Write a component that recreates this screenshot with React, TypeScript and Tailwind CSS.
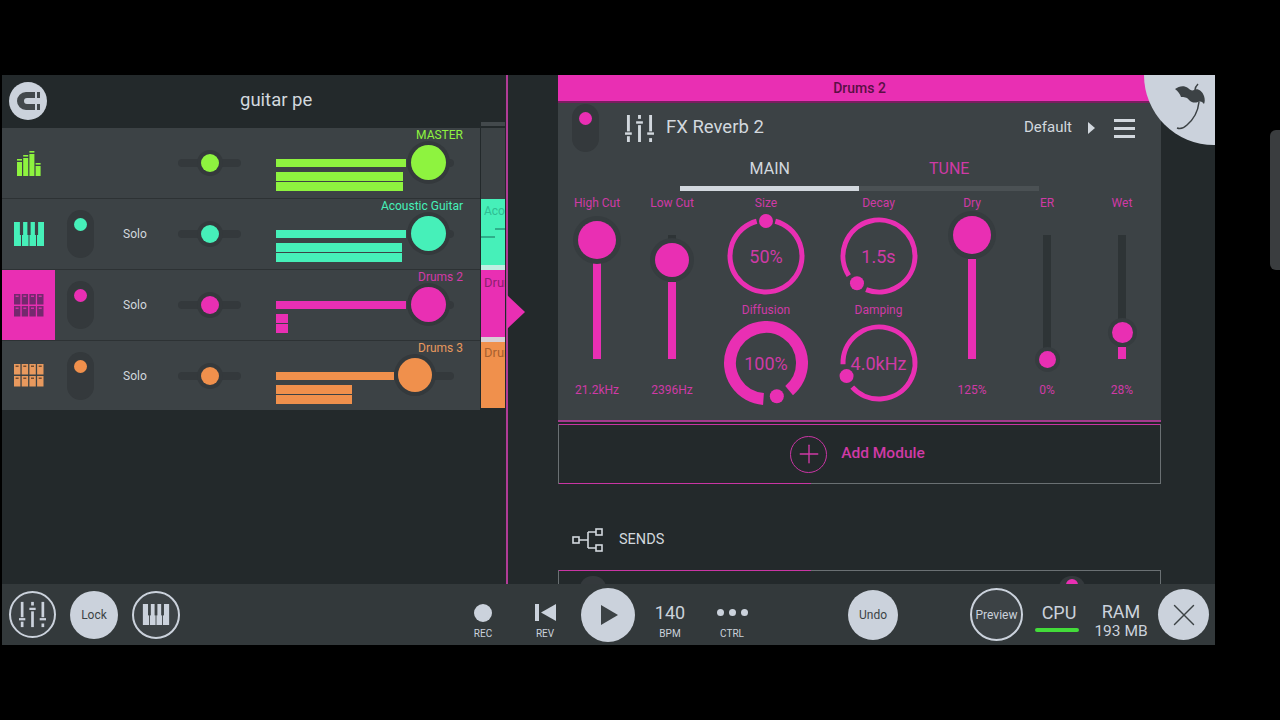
import type { ReactNode } from "react";
import { Plus, X } from "lucide-react";

const font = { fontFamily: "Roboto, 'Noto Sans', sans-serif" };

const tracks = [
  { name: "MASTER", icon: "bars", bg: "bg-[#8ef33f]", text: "text-[#8ef33f]", top: 130, low: 127, knob: 152, size: 35, sw: false },
  { name: "Acoustic Guitar", icon: "piano", bg: "bg-[#46f0b9]", text: "text-[#46f0b9]", top: 130, low: 126, knob: 152, size: 35, sw: true },
  { name: "Drums 2", icon: "grid", bg: "bg-[#e92fb3]", text: "text-[#d33aa8]", top: 130, low: 12, knob: 152, size: 35, sw: true, active: true },
  { name: "Drums 3", icon: "grid", bg: "bg-[#f0904c]", text: "text-[#e8995e]", top: 118, low: 76, knob: 139, size: 34, sw: true },
];

const Mixer = ({ className }: { className?: string }) => (
  <svg viewBox="0 0 30 28" className={className} fill="currentColor">
    <rect x="2" y="0" width="3" height="17" />
    <rect x="0" y="18" width="7" height="2.5" />
    <rect x="2" y="22" width="3" height="6" />
    <rect x="13.5" y="0" width="3" height="4" />
    <rect x="11.5" y="6.5" width="7" height="2.5" />
    <rect x="13.5" y="10.5" width="3" height="17.5" />
    <rect x="25" y="0" width="3" height="17" />
    <rect x="23" y="18" width="7" height="2.5" />
    <rect x="25" y="24" width="3" height="4" />
  </svg>
);

const Piano = ({ className, notch }: { className?: string; notch: string }) => (
  <svg viewBox="0 0 30 24" className={className}>
    <rect x="0" y="0" width="30" height="24" fill="currentColor" />
    {[7.5, 15, 22.5].map((x) => (
      <rect key={x} x={x - 0.5} y="0" width="1" height="24" fill={notch} />
    ))}
    {[7.5, 15, 22.5].map((x) => (
      <rect key={x} x={x - 1.6} y="0" width="3.2" height="13" fill={notch} />
    ))}
  </svg>
);

const GridIcon = ({ className, cut }: { className?: string; cut: string }) => (
  <svg viewBox="0 0 30 23" className={className}>
    {[0, 12].map((y) =>
      [0, 7.7, 15.4, 23.1].map((x) => (
        <g key={`${x}-${y}`}>
          <rect x={x} y={y} width="6.4" height="10.5" fill="currentColor" />
          <rect x={x + 1.6} y={y + 1.6} width="3" height="1.2" fill={cut} />
        </g>
      ))
    )}
  </svg>
);

const BarsIcon = ({ className }: { className?: string }) => (
  <svg viewBox="0 0 24 25" className={className} fill="currentColor">
    <rect x="0" y="8" width="5" height="1.6" />
    <rect x="0" y="11" width="5" height="14" />
    <rect x="6.2" y="4" width="5" height="1.6" />
    <rect x="6.2" y="7" width="5" height="18" />
    <rect x="12.4" y="0" width="5" height="1.6" />
    <rect x="12.4" y="3" width="5" height="22" />
    <rect x="18.6" y="12" width="5" height="1.6" />
    <rect x="18.6" y="15" width="5" height="10" />
  </svg>
);

const Switch = ({ dot }: { dot: string }) => (
  <div className="flex h-[48px] w-[27px] justify-center rounded-[14px] bg-[#34393c] pt-[8px]">
    <div className={`h-[13px] w-[13px] rounded-full ${dot}`} />
  </div>
);

const TrackRow = ({ t }: { t: (typeof tracks)[number] }) => (
  <div className={`flex ${t.name === "Drums 3" ? "h-[69px]" : "h-[71px] border-b border-[#2d3234]"} items-center bg-[#3c4245]`}>
    <div className={`flex h-full w-[53px] shrink-0 items-center justify-center ${t.active ? t.bg : ""}`}>
      {t.icon === "bars" && <BarsIcon className={`h-[25px] w-[24px] ${t.text}`} />}
      {t.icon === "piano" && <Piano className={`h-[24px] w-[30px] ${t.text}`} notch="#3c4245" />}
      {t.icon === "grid" && (
        <GridIcon
          className={`h-[23px] w-[30px] ${t.active ? "text-[#74296e]" : t.text}`}
          cut={t.active ? "#e92fb3" : "#5a3a22"}
        />
      )}
    </div>
    <div className="ml-[12px] w-[27px] shrink-0">{t.sw && <Switch dot={t.bg} />}</div>
    <div className="ml-[29px] w-[55px] shrink-0 text-[12px] text-[#d2d8de]">{t.sw && "Solo"}</div>
    <div className="relative h-[8px] w-[63px] shrink-0 rounded-sm bg-[#34393c]">
      <div className={`absolute left-[22.5px] top-[-5px] h-[18px] w-[18px] rounded-full ring-[4px] ring-[#34393c] ${t.bg}`} />
    </div>
    <div className="relative ml-[35px] h-full w-[187px] shrink-0">
      <div className={`h-[15px] text-right text-[12px] leading-[15px] ${t.text}`}>{t.name}</div>
      <div className={`mt-[16px] h-[8px] ${t.bg}`} style={{ width: t.top }} />
      <div className="mt-[5px] flex flex-col gap-[1px]" style={{ width: t.low }}>
        <div className={`h-[9px] ${t.bg}`} />
        <div className={`h-[9px] ${t.bg}`} />
      </div>
      <div className="absolute top-[31px] h-[8px] rounded-sm bg-[#34393c]" style={{ left: t.knob, width: 178 - t.knob }} />
      <div
        className={`absolute top-[17px] rounded-full ring-[4px] ring-[#34393c] ${t.bg}`}
        style={{ left: t.knob - t.size / 2, width: t.size, height: t.size }}
      />
    </div>
  </div>
);

const Timeline = () => (
  <div className="ml-[1px] flex w-[24px] shrink-0 flex-col">
    <div className="h-[47px] bg-[#23292b]" />
    <div className="h-[4px] bg-[#43494c]" />
    <div className="h-[2px]" />
    <div className="h-[71px] bg-[#3c4245]" />
    <div className="relative h-[66px] overflow-hidden bg-[#46f0b9] text-[12px] leading-none text-[#2fbd93]">
      <div className="whitespace-nowrap pl-[3px] pt-[6px]">Aco</div>
      <div className="absolute left-0 top-[37px] h-[2px] w-[14px] bg-[#2fae8a]" />
      <div className="absolute left-[14px] top-[29px] h-[2px] w-[10px] bg-[#2fae8a]" />
    </div>
    <div className="h-[5px] bg-[#bfeee2]" />
    <div className="h-[67px] overflow-hidden bg-[#e92fb3] text-[13px] leading-none text-[#8d1f70]">
      <div className="whitespace-nowrap pl-[3px] pt-[6px]">Drums</div>
    </div>
    <div className="h-[5px] bg-[#d7cfd6]" />
    <div className="h-[66px] overflow-hidden bg-[#f0904c] text-[13px] leading-none text-[#a8602f]">
      <div className="whitespace-nowrap pl-[3px] pt-[4px]">Drums</div>
    </div>
  </div>
);

const LeftPanel = () => (
  <div className="flex w-[504px] shrink-0">
    <div className="flex w-[478px] shrink-0 flex-col">
      <div className="flex h-[53px] items-center bg-[#23292b]">
        <div className="ml-[7px] mb-[1px] flex h-[38px] w-[38px] items-center justify-center rounded-full bg-[#cbd2dc]">
          <svg viewBox="0 0 26 24" className="h-[24px] w-[26px]">
            <path d="M20 3H11a9 9 0 0 0 0 18h9v-6h-8a3 3 0 0 1 0-6h8z" fill="#43494d" />
            <rect x="22" y="3" width="3" height="6" fill="#43494d" />
            <rect x="22" y="15" width="3" height="6" fill="#43494d" />
          </svg>
        </div>
        <div className="mb-[1px] ml-[193px] text-[18.5px] text-[#d2d8de]">guitar pe</div>
      </div>
      {tracks.map((t) => (
        <TrackRow key={t.name} t={t} />
      ))}
    </div>
    <Timeline />
  </div>
);

const Slider = ({
  label, value, cy, size, fill, halo = 5,
}: { label: string; value: string; cy: number; size: number; fill: number; halo?: number }) => (
  <div className="flex w-[75px] shrink-0 flex-col items-center">
    <div className="h-[14px] text-[12px] leading-[14px] text-[#cf3aa6]">{label}</div>
    <div className="relative h-[164px] w-full">
      <div className="absolute left-[33.5px] top-[25px] h-[124px] w-[8px] bg-[#2e3436]" />
      <div className="absolute bottom-[15px] left-[33.5px] w-[8px] bg-[#e92fb3]" style={{ top: fill - 210 }} />
      <div
        className="absolute rounded-full bg-[#e92fb3]"
        style={{
          width: size,
          height: size,
          left: 37.5 - size / 2,
          top: cy - 210 - size / 2,
          boxShadow: `0 0 0 ${halo}px #363c3f`,
        }}
      />
    </div>
    <div className="mt-[9px] text-[12px] leading-[14px] text-[#cf3aa6]">{value}</div>
  </div>
);

const arc = (angle: number, gap: number, r: number) => {
  const pt = (a: number) => {
    const rad = (a * Math.PI) / 180;
    return `${(42 + r * Math.sin(rad)).toFixed(2)} ${(42 - r * Math.cos(rad)).toFixed(2)}`;
  };
  return `M${pt(angle + gap)} A${r} ${r} 0 1 1 ${pt(angle - gap + 360)}`;
};

const Dial = ({
  text, angle, gap, stroke = 5, r = 36,
}: { text: string; angle: number; gap: number; stroke?: number; r?: number }) => {
  const rad = (angle * Math.PI) / 180;
  return (
    <div className="relative mt-[4px] h-[84px] w-[84px]">
      <svg viewBox="0 0 84 84" className="h-[84px] w-[84px]">
        <path d={arc(angle, gap, r)} fill="none" stroke="#e92fb3" strokeWidth={stroke} />
        <circle cx={42 + 35 * Math.sin(rad)} cy={42 - 35 * Math.cos(rad)} r="7" fill="#e92fb3" />
      </svg>
      <div className="absolute inset-0 flex items-center justify-center text-[18px] text-[#cf3aa6]">{text}</div>
    </div>
  );
};

const DialColumn = ({ className, children }: { className: string; children: ReactNode }) => (
  <div className={`flex shrink-0 flex-col items-center ${className}`}>{children}</div>
);

const DialLabel = ({ children, className = "" }: { children: string; className?: string }) => (
  <div className={`h-[14px] text-[12px] leading-[14px] text-[#cf3aa6] ${className}`}>{children}</div>
);

const Module = () => (
  <div className="h-[319px] shrink-0 border-b-2 border-[#a53a8e] bg-[#3c4245]">
    <div className="flex h-[50px] items-center pr-[26px]">
      <div className="ml-[14px]">
        <Switch dot="bg-[#e92fb3]" />
      </div>
      <Mixer className="ml-[26px] h-[27px] w-[29px] text-[#d2d8de]" />
      <div className="ml-[12px] text-[18.5px] text-[#d2d8de]">FX Reverb 2</div>
      <div className="mb-[1px] ml-auto text-[15px] text-[#d2d8de]">Default</div>
      <svg viewBox="0 0 7 12" className="ml-[16px] h-[12px] w-[7px]">
        <path d="M0 0l7 6-7 6z" fill="#d2d8de" />
      </svg>
      <div className="ml-[19px] flex w-[21px] flex-col gap-[5px]">
        <div className="h-[3px] bg-[#d2d8de]" />
        <div className="h-[3px] bg-[#d2d8de]" />
        <div className="h-[3px] bg-[#d2d8de]" />
      </div>
    </div>
    <div className="ml-[122px] w-[359px]">
      <div className="grid h-[32px] grid-cols-2 items-center text-center text-[16px]">
        <div className="text-[#d2d8de]">MAIN</div>
        <div className="text-[#cf3aa6]">TUNE</div>
      </div>
      <div className="mt-[1px] flex h-[5px]">
        <div className="w-[179px] bg-[#d2d8de]" />
        <div className="flex-1 bg-[#4b5154]" />
      </div>
    </div>
    <div className="mt-[5px] flex pl-[1.5px]">
      <Slider label="High Cut" value="21.2kHz" cy={240} size={38} fill={263} />
      <Slider label="Low Cut" value="2396Hz" cy={260} size={34} fill={282} />
      <DialColumn className="w-[113px]">
        <DialLabel>Size</DialLabel>
        <Dial text="50%" angle={0} gap={15} />
        <DialLabel className="mt-[5px]">Diffusion</DialLabel>
        <Dial text="100%" angle={162} gap={22} stroke={12} />
      </DialColumn>
      <DialColumn className="w-[112px]">
        <DialLabel>Decay</DialLabel>
        <Dial text="1.5s" angle={219} gap={18} />
        <DialLabel className="mt-[5px]">Damping</DialLabel>
        <Dial text="4.0kHz" angle={248} gap={20} />
      </DialColumn>
      <Slider label="Dry" value="125%" cy={235} size={38} fill={259} />
      <Slider label="ER" value="0%" cy={359} size={17} fill={359} halo={4} />
      <Slider label="Wet" value="28%" cy={332} size={21} fill={347} halo={4} />
    </div>
  </div>
);

const AddModule = () => (
  <div className="mt-[2px] flex h-[60px] shrink-0 flex-col border-x border-[#6a7073]">
    <div className="h-[1px] bg-[#c935a4]" />
    <div className="flex flex-1 items-center justify-center gap-[14px] pr-[4px] text-[15.5px] font-medium text-[#cf3aa6]">
      <div className="flex h-[37px] w-[37px] items-center justify-center rounded-full border border-[#c935a4]">
        <Plus className="h-[30px] w-[30px]" strokeWidth={1.1} />
      </div>
      Add Module
    </div>
    <div className="flex h-[1px]">
      <div className="w-[252px] bg-[#c935a4]" />
      <div className="flex-1 bg-[#6a7073]" />
    </div>
  </div>
);

const Sends = () => (
  <div className="mt-[42px] flex h-[28px] shrink-0 items-center pl-[14px]">
    <svg viewBox="0 0 31 24" className="h-[24px] w-[31px]" fill="none" stroke="#d2d8de" strokeWidth="1.6">
      <rect x="1" y="9" width="6" height="6" />
      <rect x="24" y="1" width="6" height="6" />
      <rect x="24" y="17" width="6" height="6" />
      <path d="M7 12h9M16 4v16M16 4h8M16 20h8" />
    </svg>
    <div className="ml-[16px] text-[14.5px] text-[#d2d8de]">SENDS</div>
  </div>
);

const NextModule = () => (
  <div className="mt-[16px] flex-1 overflow-hidden border-x border-[#6a7073]">
    <div className="flex h-[1px]">
      <div className="w-[252px] bg-[#c935a4]" />
      <div className="flex-1 bg-[#6a7073]" />
    </div>
    <div className="flex pt-[5px]">
      <div className="ml-[21px] h-[24px] w-[26px] rounded-full bg-[#34393c]" />
      <div className="ml-[453px] flex h-[24px] w-[26px] justify-center rounded-full bg-[#34393c] pt-[3px]">
        <div className="h-[12px] w-[12px] rounded-full bg-[#e92fb3]" />
      </div>
    </div>
  </div>
);

const RightPanel = () => (
  <div className="relative flex-1 overflow-hidden bg-[#23292b] pl-[50px]">
    <div className="flex h-full w-[603px] flex-col">
      <div className="flex h-[28px] shrink-0 items-center justify-center border-b-2 border-[#7a1d60] bg-[#e92fb3] text-[14px] font-medium text-[#5a1045]">
        Drums 2
      </div>
      <Module />
      <AddModule />
      <Sends />
      <NextModule />
    </div>
    {/* FL logo corner */}
    <div className="absolute right-0 top-0 flex h-[70px] w-[71px] items-start justify-end rounded-bl-[71px] bg-[#cbd2dc] pr-[9px] pt-[8px]">
      <svg viewBox="0 0 32 48" className="h-[48px] w-[32px]">
        <path
          d="M1 6C5 3 10 2 14 5c2 2 4 3 6 2 3-2 8 0 10 6 1 3 1 6 0 8-2-3-4-3-6-2-3 1-6 1-9-2-2-3-5-3-8-3-1-3-3-6-6-8z"
          fill="#3c4245"
        />
        <path d="M24 1c-2 2-3 4-3 6M25 19c-1 9-5 17-12 23-3 3-7 4-10 3" fill="none" stroke="#3c4245" strokeWidth="1.5" />
      </svg>
    </div>
  </div>
);

const Transport = ({ label, children }: { label: string; children: ReactNode }) => (
  <div className="mt-[10px] flex w-[62px] shrink-0 flex-col items-center">
    <div className="flex h-[26px] items-center justify-center">{children}</div>
    <div className="mt-[2px] text-[10px] leading-[12px] text-[#cbd2dc]">{label}</div>
  </div>
);

const BottomBar = () => (
  <div className="flex h-[61px] shrink-0 items-center bg-[#33393b] pl-[7px]">
    <div className="flex h-[47px] w-[47px] shrink-0 items-center justify-center rounded-full border-2 border-[#cbd2dc] bg-[#3c4245]">
      <Mixer className="h-[27px] w-[27px] text-[#cbd2dc]" />
    </div>
    <div className="ml-[14px] flex h-[48px] w-[48px] shrink-0 items-center justify-center rounded-full bg-[#cbd2dc] text-[12px] text-[#3c4245]">
      Lock
    </div>
    <div className="ml-[14px] flex h-[48px] w-[48px] shrink-0 items-center justify-center rounded-full border-2 border-[#cbd2dc] bg-[#3c4245]">
      <Piano className="h-[21px] w-[28px] text-[#cbd2dc]" notch="#3c4245" />
    </div>
    <div className="ml-[272px]">
      <Transport label="REC">
        <div className="h-[18px] w-[18px] rounded-full bg-[#cbd2dc]" />
      </Transport>
    </div>
    <Transport label="REV">
      <svg viewBox="0 0 21 17" className="h-[17px] w-[21px]" fill="#cbd2dc">
        <rect width="4" height="17" />
        <path d="M21 0v17L6 8.5z" />
      </svg>
    </Transport>
    <div className="ml-[5px] flex h-[54px] w-[54px] shrink-0 items-center justify-center rounded-full bg-[#cbd2dc] pl-[3px]">
      <svg viewBox="0 0 17 20" className="h-[20px] w-[17px]">
        <path d="M0 0l17 10L0 20z" fill="#3c4245" />
      </svg>
    </div>
    <div className="ml-[4px]">
      <Transport label="BPM">
        <div className="text-[18px] text-[#cbd2dc]">140</div>
      </Transport>
    </div>
    <Transport label="CTRL">
      <div className="flex gap-[5px]">
        <div className="h-[7px] w-[7px] rounded-full bg-[#cbd2dc]" />
        <div className="h-[7px] w-[7px] rounded-full bg-[#cbd2dc]" />
        <div className="h-[7px] w-[7px] rounded-full bg-[#cbd2dc]" />
      </div>
    </Transport>
    <div className="ml-[85px] flex h-[50px] w-[50px] shrink-0 items-center justify-center rounded-full bg-[#cbd2dc] text-[12px] text-[#3c4245]">
      Undo
    </div>
    <div className="ml-[72px] flex h-[53px] w-[53px] shrink-0 items-center justify-center rounded-full border-2 border-[#cbd2dc] bg-[#3c4245] text-[12px] text-[#cbd2dc]">
      Preview
    </div>
    <div className="ml-[9px] mt-[4px] flex w-[54px] shrink-0 flex-col items-center">
      <div className="text-[18px] leading-[22px] text-[#cbd2dc]">CPU</div>
      <div className="mr-[4px] mt-[4px] h-[4px] w-[44px] rounded-sm bg-[#43dc3a]" />
    </div>
    <div className="ml-[6px] mt-[10px] flex w-[58px] shrink-0 flex-col items-center">
      <div className="text-[18px] leading-[22px] text-[#cbd2dc]">RAM</div>
      <div className="whitespace-nowrap text-[15.5px] leading-[16px] text-[#cbd2dc]">193 MB</div>
    </div>
    <div className="ml-[8px] flex h-[51px] w-[51px] shrink-0 items-center justify-center rounded-full bg-[#cbd2dc]">
      <X className="h-[38px] w-[38px] text-[#3c4245]" strokeWidth={0.9} />
    </div>
  </div>
);

export default function App() {
  return (
    <div className="flex h-[720px] w-[1280px] overflow-hidden bg-black pl-[2px] pt-[75px]" style={font}>
      <div className="flex h-[570px] w-[1213px] shrink-0 flex-col">
        <div className="relative flex h-[509px] shrink-0 bg-[#23292b]">
          <LeftPanel />
          <div className="w-[2px] shrink-0 bg-[#b13c97]" />
          <RightPanel />
          <svg viewBox="0 0 18 34" className="absolute left-[505px] top-[220px] h-[34px] w-[18px]">
            <path d="M0 0l18 17L0 34z" fill="#e92fb3" />
          </svg>
        </div>
        <BottomBar />
      </div>
      <div className="ml-[55px] mt-[55px] h-[140px] w-[10px] shrink-0 rounded-l-md bg-[#3a3d3f]" />
    </div>
  );
}
